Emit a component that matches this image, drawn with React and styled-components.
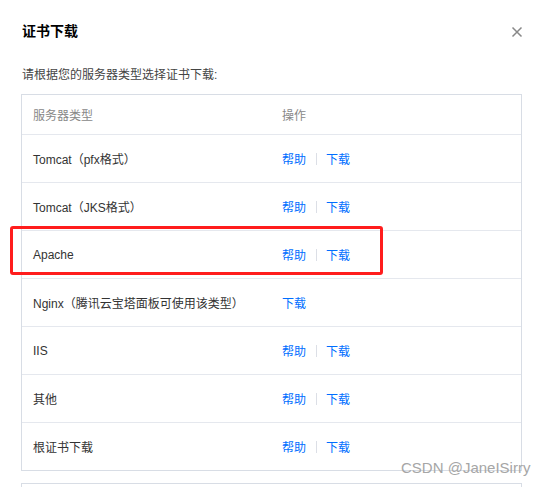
import React from "react";
import styled, { createGlobalStyle } from "styled-components";

const GlobalStyle = createGlobalStyle`
  body {
    margin: 0;
    background: #fff;
    font-family: "Liberation Sans", "Noto Sans CJK SC", sans-serif;
  }
`;

const Dialog = styled.div`
  position: relative;
  width: 544px;
  height: 487px;
  overflow: hidden;
  padding: 21px 22px 0 21px;
  box-sizing: border-box;
`;

const Header = styled.div`
  display: flex;
  align-items: center;
  justify-content: space-between;
  height: 20px;
  padding-left: 1px;
`;

const Title = styled.h3`
  margin: 0;
  font-size: 14px;
  font-weight: bold;
  color: #000;
  line-height: 20px;
`;

const Close = styled.button`
  border: 0;
  background: none;
  padding: 0;
  width: 14px;
  height: 14px;
  margin-right: -2px;
  margin-top: 2px;
  display: flex;
  align-items: center;
  justify-content: center;
  cursor: pointer;
`;

const Tip = styled.p`
  margin: 25px 0 0 1px;
  font-size: 12px;
  line-height: 18px;
  color: #444;
`;

const Table = styled.div`
  margin-top: 10px;
  width: 501px;
  border: 1px solid #d8dde5;
  box-sizing: border-box;
`;

const Row = styled.div`
  display: grid;
  grid-template-columns: 249px 1fr;
  align-items: center;
  height: ${(p) => (p.$head ? "39px" : "47px")};
  padding-left: 11px;
  font-size: 12px;
  color: ${(p) => (p.$head ? "#888" : "#333")};
  border-bottom: ${(p) => (p.$last ? "0" : "1px solid #e5e8ee")};
`;

const Actions = styled.div`
  display: flex;
  align-items: center;
`;

const Link = styled.a`
  color: #006eff;
  text-decoration: none;
  cursor: pointer;
`;

const Sep = styled.span`
  width: 1px;
  height: 12px;
  margin: 0 9px 0 10px;
  background: #dcdfe6;
`;

const NextBox = styled.div`
  margin-top: 12px;
  width: 501px;
  height: 30px;
  border: 1px solid #d8dde5;
  box-sizing: border-box;
`;

const Highlight = styled.div`
  position: absolute;
  left: 10px;
  top: 226px;
  width: 373px;
  height: 49px;
  border: 3px solid #ff1d1d;
  border-radius: 3px;
  box-sizing: border-box;
  pointer-events: none;
`;

const Watermark = styled.div`
  position: absolute;
  left: 401px;
  top: 459px;
  font-size: 15px;
  line-height: 18px;
  color: #a6a6a6;
  white-space: nowrap;
`;

const rows = [
  { name: "Tomcat（pfx格式）", help: true },
  { name: "Tomcat（JKS格式）", help: true },
  { name: "Apache", help: true },
  { name: "Nginx（腾讯云宝塔面板可使用该类型）", help: false },
  { name: "IIS", help: true },
  { name: "其他", help: true },
  { name: "根证书下载", help: true },
];

export default function App() {
  return (
    <>
      <GlobalStyle />
      <Dialog>
        <Header>
          <Title>证书下载</Title>
          <Close aria-label="关闭">
            <svg width="12" height="12" viewBox="0 0 12 12">
              <path
                d="M1.5 1.5 L10.5 10.5 M10.5 1.5 L1.5 10.5"
                stroke="#888"
                strokeWidth="1.5"
                fill="none"
              />
            </svg>
          </Close>
        </Header>
        <Tip>请根据您的服务器类型选择证书下载:</Tip>
        <Table>
          <Row $head>
            <span>服务器类型</span>
            <span>操作</span>
          </Row>
          {rows.map((r, i) => (
            <Row key={r.name} $last={i === rows.length - 1}>
              <span>{r.name}</span>
              <Actions>
                {r.help && (
                  <>
                    <Link>帮助</Link>
                    <Sep />
                  </>
                )}
                <Link>下载</Link>
              </Actions>
            </Row>
          ))}
        </Table>
        <NextBox />
        <Highlight />
        <Watermark>CSDN @JaneISirry</Watermark>
      </Dialog>
    </>
  );
}
